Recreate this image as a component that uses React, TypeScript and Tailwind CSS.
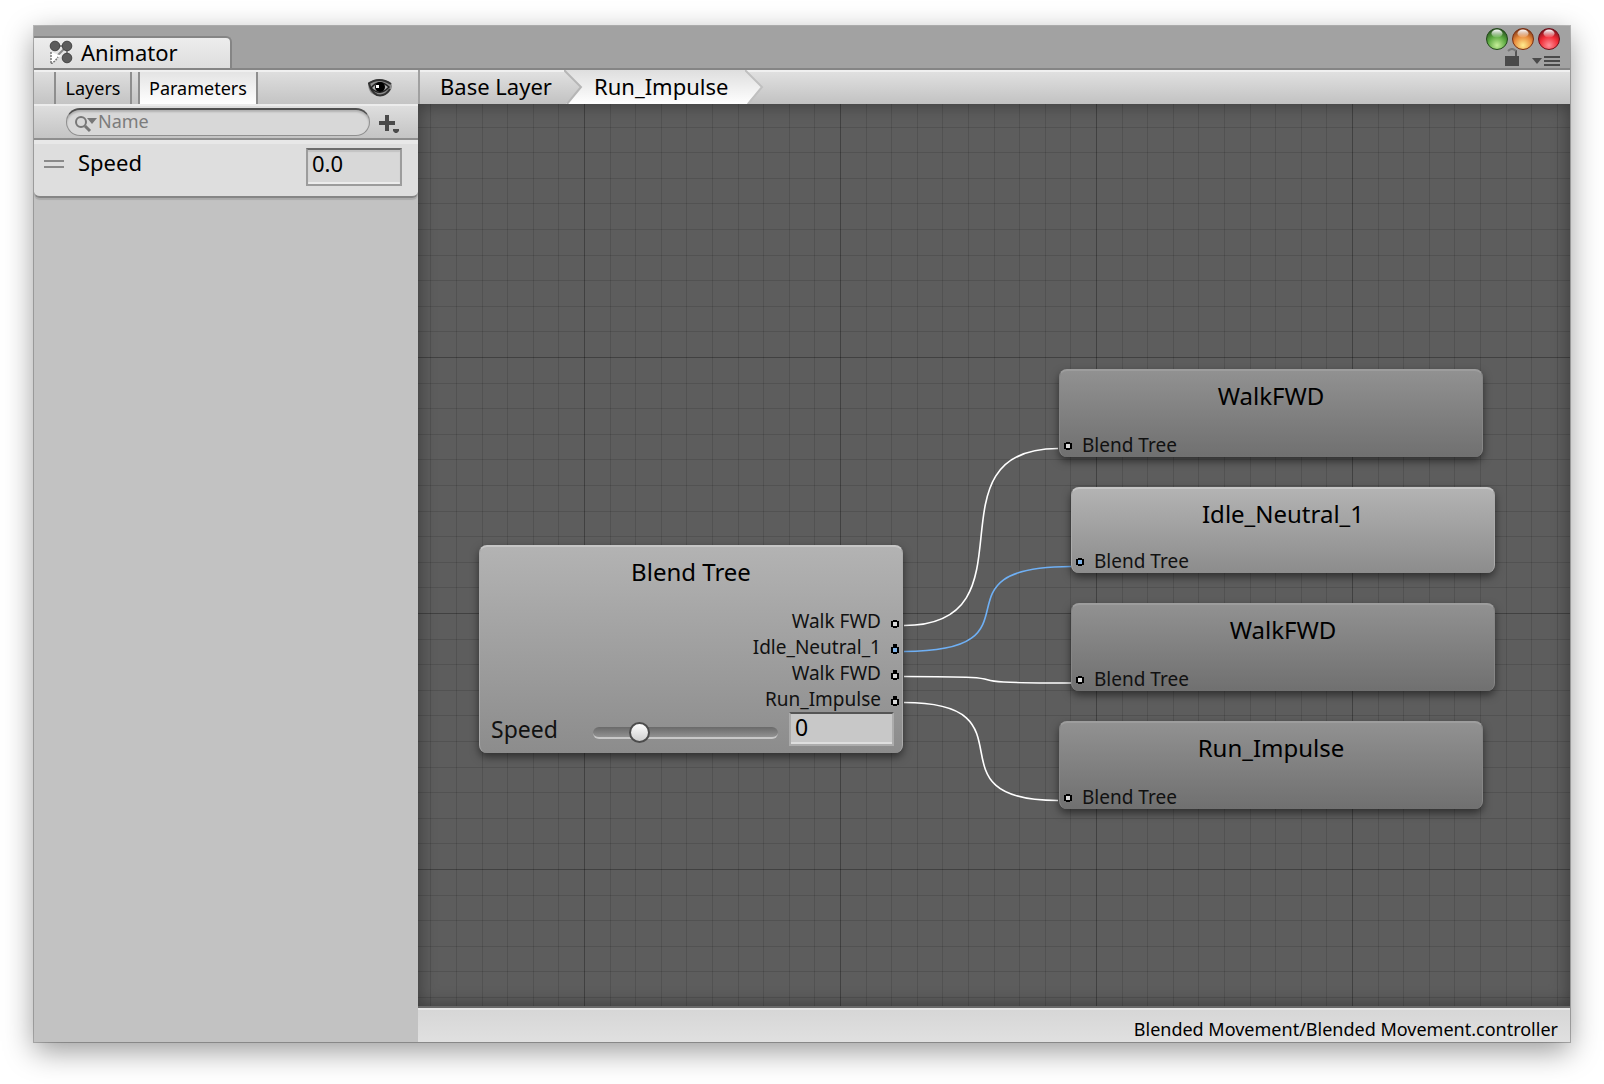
import type { ReactNode } from 'react';

type Tone = 'light' | 'dark';

const MINOR = [26, 51, 77, 102, 128, 154, 179, 205, 230];

function Grid() {
  return (
    <svg className="absolute inset-0 size-full" aria-hidden="true">
      <defs>
        <pattern id="grid" width="256" height="256" x="166" y="253" patternUnits="userSpaceOnUse">
          {MINOR.map((p) => (
            <g key={p} fill="#000" fillOpacity="0.12">
              <rect x={p} y="0" width="1" height="256" />
              <rect x="0" y={p} width="256" height="1" />
            </g>
          ))}
          <g fill="#000" fillOpacity="0.3">
            <rect x="0" y="0" width="1" height="256" />
            <rect x="0" y="0" width="256" height="1" />
          </g>
        </pattern>
      </defs>
      <rect width="100%" height="100%" fill="url(#grid)" />
    </svg>
  );
}

function Links() {
  return (
    <svg className="absolute inset-0 size-full" fill="none" stroke="#fff" strokeWidth="1.6" aria-hidden="true">
      <path d="M486 521.500C622 521.500 504 344.500 640 344.500" />
      <path d="M486 547.500C633 547.500 506 462.500 653 462.500" stroke="#6fb0f5" />
      <path d="M486 572.500C633 572.500 506 579 653 579" />
      <path d="M486 598.500C622 598.500 504 696.500 640 696.500" />
    </svg>
  );
}

function Port({ blue, capped }: { blue?: boolean; capped?: boolean }) {
  return (
    <svg className="h-[10px] w-2 shrink-0" viewBox="0 0 8 10" shapeRendering="crispEdges" aria-hidden="true">
      {capped && <rect x="2" y="0" width="4" height="2" fill="#000" />}
      <path d="M2 2h4v1h2v6h-2v1h-4v-1h-2v-6h2z" fill="#000" />
      <rect x="2" y="4" width="4" height="4" fill={blue ? '#7fb2e6' : '#d8d8d8'} />
    </svg>
  );
}

function GraphNode({ title, tone, place, children }: { title: string; tone: Tone; place: string; children: ReactNode }) {
  const skin =
    tone === 'light'
      ? 'border-t-[#c6c6c6] border-x-[#ababab] from-[#b3b3b3] to-[#8c8c8c]'
      : 'border-t-[#9d9d9d] border-x-[#868686] from-[#919191] to-[#707070]';
  return (
    <section
      className={`absolute flex w-[424px] flex-col rounded-lg border-x border-t-2 bg-linear-to-b shadow-[0_4px_9px_rgba(0,0,0,0.5)] ${skin} ${place}`}
    >
      <h2 className="mt-[9px] text-center text-2xl leading-8">{title}</h2>
      {children}
    </section>
  );
}

function StateNode({ title, tone, place, blue }: { title: string; tone: Tone; place: string; blue?: boolean }) {
  return (
    <GraphNode title={title} tone={tone} place={place}>
      <div className="mt-auto flex items-center gap-[10px] pl-1 text-[19px] leading-6 text-[#111]">
        <Port blue={blue} />
        Blend Tree
      </div>
    </GraphNode>
  );
}

const OUTPUTS = [
  { name: 'Walk FWD' },
  { name: 'Idle_Neutral_1', blue: true },
  { name: 'Walk FWD' },
  { name: 'Run_Impulse' },
];

function AnimatorIcon() {
  return (
    <svg className="size-6" viewBox="0 0 24 24" aria-hidden="true">
      <path d="M6 6h12v12M18 6 6 18" stroke="#8a8a8a" strokeWidth="2" fill="none" />
      <g fill="#5c5c5c" stroke="#444">
        <circle cx="6" cy="6" r="4.800" />
        <circle cx="18" cy="6" r="4.800" />
        <circle cx="18" cy="18" r="4.800" />
      </g>
      <path d="M2 12v12l4-3 3-4 4-1z" fill="#fff" />
      <path d="M2 12v12l4-3 3-4" fill="none" stroke="#777" strokeWidth="1.500" strokeDasharray="2 1" />
    </svg>
  );
}

function EyeIcon() {
  return (
    <svg className="h-5 w-6" viewBox="0 0 24 20" aria-hidden="true">
      <path d="M0 5Q11-3 23 5Q26 10 20 15Q11 21 3 15Q0 11 0 5z" fill="#8c8c8c" />
      <path d="M0 6Q11-2 23 6M1 5Q3 14 9 17Q17 19 22 11" fill="none" stroke="#333" strokeWidth="2" />
      <path d="M3 10Q11 0 21 9Q12 19 3 10z" fill="#aaa" stroke="#222" strokeWidth="1.500" />
      <circle cx="12" cy="9" r="5" fill="#000" />
      <rect x="8" y="7" width="3" height="3" fill="#fff" />
    </svg>
  );
}

function Orb({ id, label, rim, mid, low }: { id: string; label: string; rim: string; mid: string; low: string }) {
  return (
    <button type="button" aria-label={label} className="size-[22px]">
      <svg viewBox="0 0 22 22" className="size-full" aria-hidden="true">
        <defs>
          <radialGradient id={id} cx="0.5" cy="0.8" r="0.8">
            <stop offset="0" stopColor={low} />
            <stop offset="0.55" stopColor={mid} />
            <stop offset="1" stopColor={rim} />
          </radialGradient>
          <linearGradient id={`${id}-shine`} x1="0" y1="0" x2="0" y2="1">
            <stop offset="0" stopColor="#fff" />
            <stop offset="1" stopColor="#fff" stopOpacity="0.1" />
          </linearGradient>
        </defs>
        <circle cx="11" cy="11" r="10.500" fill={`url(#${id})`} stroke={rim} />
        <ellipse cx="11" cy="5.500" rx="5.500" ry="4" fill={`url(#${id}-shine)`} />
      </svg>
    </button>
  );
}

function ChevronEnd() {
  return (
    <svg className="h-[34px] w-5 shrink-0" viewBox="0 0 20 34" aria-hidden="true">
      <defs>
        <linearGradient id="crumb-current" x1="0" y1="0" x2="0" y2="1">
          <stop offset="0" stopColor="#dedede" />
          <stop offset="1" stopColor="#fff" />
        </linearGradient>
      </defs>
      <path d="M0 0 17 17 2 34H0z" fill="url(#crumb-current)" />
      <path d="M0 0 17 17 3 34" fill="none" stroke="#c0c0c0" strokeWidth="2" />
    </svg>
  );
}

export default function App() {
  return (
    <div className="flex h-screen min-h-[900px] bg-white px-[34px] pt-[26px] pb-[42px] font-['Noto_Sans','Open_Sans',sans-serif] text-black">
      <main className="flex min-w-0 flex-1 flex-col bg-[#a2a2a2] shadow-[0_0_0_1px_rgba(0,0,0,0.25),0_9px_28px_rgba(0,0,0,0.4)]">
        <header className="flex h-[44px] shrink-0 items-end justify-between border-b-2 border-[#858585]">
          <h1 className="flex h-8 w-[198px] items-center gap-2 rounded-tr-md border-t-2 border-r-2 border-[#858585] bg-linear-to-b from-[#ededed] to-[#dedede] pb-[2px] pl-[15px] text-[22px] leading-7">
            <AnimatorIcon />
            Animator
          </h1>
          <div className="flex flex-col items-end self-start pr-[10px]">
            <div className="flex gap-1 pt-[2px]">
              <Orb id="orb-green" label="Minimize" rim="#23491b" mid="#5aa83f" low="#c5ee98" />
              <Orb id="orb-amber" label="Zoom" rim="#7a2f12" mid="#e88a3c" low="#ffec8e" />
              <Orb id="orb-red" label="Close" rim="#70101a" mid="#f02a34" low="#ff8f98" />
            </div>
            <div className="flex items-end gap-3">
              <button type="button" aria-label="Lock">
                <svg className="-mt-[2px] h-[18px] w-[15px]" viewBox="0 0 15 18" aria-hidden="true">
                  <path d="M0 8h14v10h-14z" fill="#4a4a4a" />
                  <path d="M11 8V3h1" fill="none" stroke="#555" strokeWidth="2" />
                  <path d="M3 3Q7-1 11 3" fill="none" stroke="#777" strokeWidth="2" />
                </svg>
              </button>
              <button type="button" aria-label="Panel menu">
                <svg className="h-[10px] w-7" viewBox="0 0 28 10" aria-hidden="true">
                  <path d="M0 2h10L5 8z" fill="#4a4a4a" />
                  <path d="M12 1h16M12 5h16M12 9h16" stroke="#4a4a4a" strokeWidth="2" />
                </svg>
              </button>
            </div>
          </div>
        </header>

        <div className="flex min-h-0 flex-1">
          <aside className="flex w-[384px] shrink-0 flex-col bg-[#c2c2c2]">
            <div className="flex h-[34px] shrink-0 items-stretch border-t-2 border-[#f0f0f0] bg-linear-to-b from-[#dedede] to-[#c4c4c4] pr-[26px] pl-5 text-lg leading-8">
              <button type="button" className="w-[78px] border-x-2 border-[#8e8e8e]">
                Layers
              </button>
              <button type="button" className="ml-[6px] w-[120px] border-x-2 border-[#8e8e8e] bg-linear-to-b from-[#e4e4e4] to-white">
                Parameters
              </button>
              <button type="button" aria-label="Toggle visibility" className="ml-auto">
                <EyeIcon />
              </button>
            </div>

            <div className="flex h-9 shrink-0 items-center border-t-2 border-b-2 border-t-[#ececec] border-b-[#8e8e8e] bg-linear-to-b from-[#dedede] to-[#c4c4c4] pr-[18px] pl-8">
              <label className="flex h-7 flex-1 items-center rounded-full border border-t-2 border-[#8f8f8f] border-t-[#505050] bg-[#d8d8d8] pl-[7px] shadow-[inset_0_2px_2px_rgba(0,0,0,0.18)]">
                <svg className="h-5 w-6 shrink-0" viewBox="0 0 24 20" fill="none" aria-hidden="true">
                  <circle cx="7" cy="9" r="5" stroke="#777" strokeWidth="2" />
                  <path d="M11 13l5 5" stroke="#777" strokeWidth="3" />
                  <path d="M13 5h10l-5 6z" fill="#777" />
                </svg>
                <input aria-label="Search parameters" placeholder="Name" className="w-full min-w-0 bg-transparent pb-1 text-lg leading-6 outline-none placeholder:text-[#7c7c7c]" />
              </label>
              <button type="button" aria-label="Add parameter" className="ml-2 pt-[2px]">
                <svg className="h-5 w-[22px]" viewBox="0 0 22 20" aria-hidden="true">
                  <path d="M7 2h4v6h6v4h-6v6h-4v-6h-6v-4h6z" fill="#4a4a4a" />
                  <path d="M15 16h6v2l-2 2h-2l-2-2z" fill="#4a4a4a" />
                </svg>
              </button>
            </div>

            <div className="flex h-[58px] shrink-0 items-start rounded-b-md border-t-4 border-b-2 border-t-[#e8e8e8] border-b-[#858585] bg-[#dedede] pt-1 pr-4 pl-[10px] shadow-[0_2px_1px_#aaa]">
              <svg className="mt-3 h-2 w-5" viewBox="0 0 20 8" aria-hidden="true">
                <path d="M0 1h20M0 7h20" stroke="#8a8a8a" strokeWidth="2" />
              </svg>
              <label htmlFor="speed-param" className="ml-[14px] text-[22px] leading-7">
                Speed
              </label>
              <input
                id="speed-param"
                defaultValue="0.0"
                className="ml-auto h-[38px] w-24 border-2 border-[#9c9c9c] border-t-[#6c6c6c] bg-[#d8d8d8] pb-2 pl-1 text-[22px] leading-7 shadow-[inset_0_2px_1px_#c4c4c4,inset_0_-2px_0_#ececec] outline-none"
              />
            </div>
          </aside>

          <div className="flex min-w-0 flex-1 flex-col">
            <nav aria-label="Layer path" className="flex h-[34px] shrink-0 items-stretch border-l-2 border-[#a0a0a0] bg-linear-to-b from-[#e2e2e2] to-[#c2c2c2] text-[22px] leading-8 shadow-[inset_0_2px_0_#f0f0f0]">
              <a href="#base-layer" className="w-[144px] pl-5">
                Base Layer
              </a>
              <div className="flex bg-linear-to-b from-[#dedede] to-white">
                <svg className="h-[34px] w-5 shrink-0" viewBox="0 0 20 34" aria-hidden="true">
                  <defs>
                    <linearGradient id="crumb-base" x1="0" y1="0" x2="0" y2="1">
                      <stop offset="0" stopColor="#e2e2e2" />
                      <stop offset="1" stopColor="#c2c2c2" />
                    </linearGradient>
                  </defs>
                  <path d="M0 0 17 17 2 34H0z" fill="url(#crumb-base)" />
                  <path d="M0 0 17 17 3 34" fill="none" stroke="#b6b6b6" strokeWidth="2" />
                </svg>
                <a href="#run-impulse" className="w-[161px] pl-[10px]" aria-current="page">
                  Run_Impulse
                </a>
              </div>
              <ChevronEnd />
            </nav>

            <div className="relative min-h-0 flex-1 overflow-hidden bg-[#5d5d5d]">
              <Grid />
              <div className="pointer-events-none absolute inset-0 shadow-[inset_0_0_18px_rgba(0,0,0,0.4)]" />
              <Links />

              <GraphNode title="Blend Tree" tone="light" place="left-[61px] top-[441px] h-[208px]">
                <ul className="mt-5 pr-[3px] text-[19px] leading-[26px] text-[#111]">
                  {OUTPUTS.map((out, i) => (
                    <li key={i} className="flex h-[26px] items-center justify-end gap-[10px]">
                      {out.name}
                      <span className="pt-1">
                        <Port blue={out.blue} capped={i > 0} />
                      </span>
                    </li>
                  ))}
                </ul>
                <div className="flex items-center pr-2 pl-[11px]">
                  <label htmlFor="speed-slider" className="w-[102px] text-[23px] leading-8 text-[#111]">
                    Speed
                  </label>
                  <input
                    id="speed-slider"
                    type="range"
                    min="0"
                    max="100"
                    defaultValue="22"
                    className="mt-2 mr-[11px] h-5 min-w-0 flex-1 appearance-none bg-transparent [&::-webkit-slider-runnable-track]:h-3 [&::-webkit-slider-runnable-track]:rounded-md [&::-webkit-slider-runnable-track]:border-b-2 [&::-webkit-slider-runnable-track]:border-[#c8c8c8] [&::-webkit-slider-runnable-track]:bg-linear-to-b [&::-webkit-slider-runnable-track]:from-[#6a6a6a] [&::-webkit-slider-runnable-track]:to-[#929292] [&::-webkit-slider-thumb]:-mt-[5px] [&::-webkit-slider-thumb]:size-[21px] [&::-webkit-slider-thumb]:appearance-none [&::-webkit-slider-thumb]:rounded-full [&::-webkit-slider-thumb]:border-2 [&::-webkit-slider-thumb]:border-[#4c4c4c] [&::-webkit-slider-thumb]:bg-linear-to-b [&::-webkit-slider-thumb]:from-white [&::-webkit-slider-thumb]:to-[#cfcfcf]"
                  />
                  <input
                    aria-label="Speed value"
                    defaultValue="0"
                    className="h-[34px] w-[105px] border-2 border-[#acacac] border-t-[#555] bg-[#c8c8c8] pb-1 pl-1 text-[23px] leading-7 shadow-[inset_0_-2px_0_#dedede] outline-none"
                  />
                </div>
              </GraphNode>

              <StateNode title="WalkFWD" tone="dark" place="left-[641px] top-[265px] h-[88px]" />
              <StateNode title="Idle_Neutral_1" tone="light" place="left-[653px] top-[383px] h-[86px]" blue />
              <StateNode title="WalkFWD" tone="dark" place="left-[653px] top-[499px] h-[88px]" />
              <StateNode title="Run_Impulse" tone="dark" place="left-[641px] top-[617px] h-[88px]" />
            </div>

            <footer className="h-9 shrink-0 border-t-2 border-[#6a6a6a] bg-linear-to-b from-[#d6d6d6] to-[#e0e0e0] pt-1 pr-3 text-right text-lg leading-[34px] shadow-[inset_0_2px_0_#e6e6e6]">
              Blended Movement/Blended Movement.controller
            </footer>
          </div>
        </div>
      </main>
    </div>
  );
}
